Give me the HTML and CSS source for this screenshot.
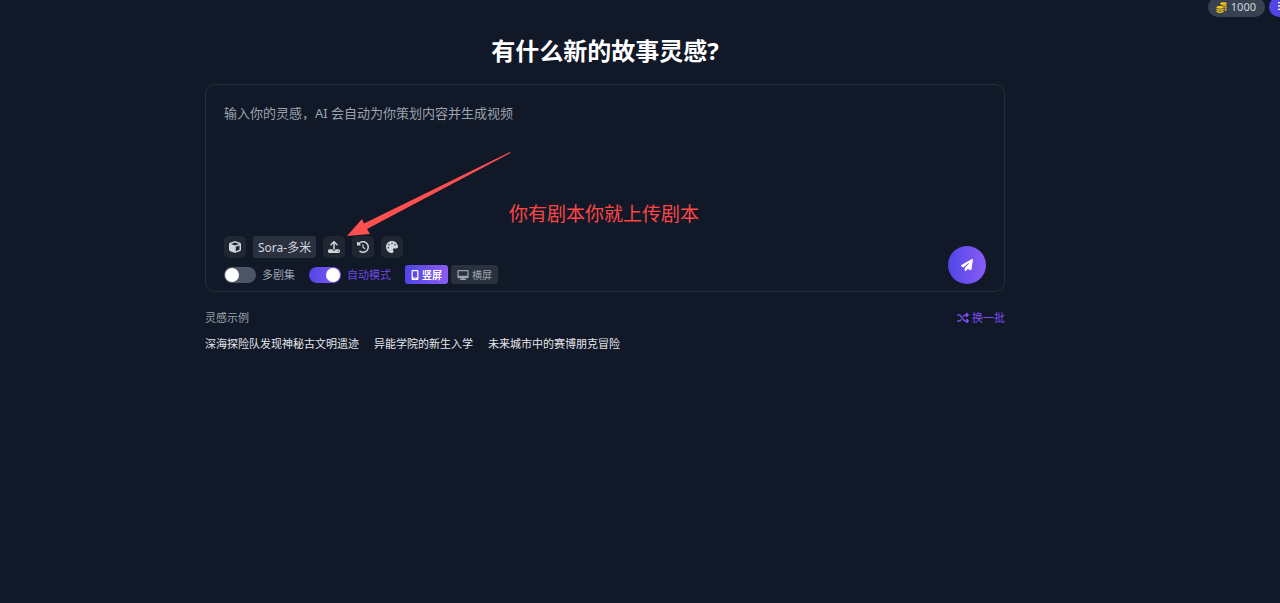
FILE: index.html
```
<!DOCTYPE html>
<html lang="zh-CN">
<head>
    <meta charset="UTF-8">
    <meta name="viewport" content="width=device-width, initial-scale=1.0">
    <title>故事灵感</title>
    <link rel="stylesheet" href="styles.css">
</head>
<body>
    <header class="topbar">
        <div class="credits">
            <svg class="icon coins" viewBox="0 0 512 512">
                <ellipse cx="345" cy="70" rx="150" ry="60"></ellipse>
                <path d="M195 112c40 32 110 44 160 42 60-2 115-18 140-42v38c0 32-55 60-125 64-30-40-100-62-175-62z"></path>
                <path d="M400 250c40-6 75-18 95-36v42c0 28-38 50-92 60zM404 352c38-7 70-18 91-34v40c0 28-38 50-91 60z"></path>
                <ellipse cx="190" cy="250" rx="170" ry="66"></ellipse>
                <path d="M20 304c40 36 110 48 170 48s130-12 170-48v42c0 34-76 62-170 62S20 380 20 346z"></path>
                <path d="M20 400c40 36 110 48 170 48s130-12 170-48v42c0 36-76 66-170 66S20 478 20 442z"></path>
            </svg>
            <span>1000</span>
        </div>
        <button class="avatar" aria-label="用户菜单">
            <svg class="icon" viewBox="0 0 12 12"><path d="M0 0h10v2H0zM0 5h10v2H0zM0 10h10v2H0z"></path></svg>
        </button>
    </header>

    <div class="page">
        <main class="main">
            <h1 class="title">有什么新的故事灵感?</h1>

            <form class="card">
                <textarea class="prompt" aria-label="灵感" placeholder="输入你的灵感，AI 会自动为你策划内容并生成视频"></textarea>

                <div class="card-footer">
                    <div class="controls">
                        <div class="tools">
                            <button type="button" class="tool" aria-label="模型">
                                <svg class="icon" viewBox="0 0 512 512"><path d="M234.500 5.700c13.900-5 29.100-5 43.100 0l192 68.600C495 83.400 512 107.500 512 134.600V377.400c0 27-17 51.200-42.500 60.300l-192 68.600c-13.900 5-29.100 5-43.100 0l-192-68.600C17 428.600 0 404.500 0 377.400V134.600c0-27 17-51.200 42.500-60.300l192-68.600zM256 66L82.300 128 256 190l173.700-62L256 66zm32 368.600l160-57.100v-188L288 246.600v188z"></path></svg>
                            </button>
                            <button type="button" class="model">Sora-多米</button>
                            <button type="button" class="tool" aria-label="上传剧本">
                                <svg class="icon" viewBox="0 0 512 512"><path d="M288 109.300V352c0 17.700-14.300 32-32 32s-32-14.300-32-32V109.300l-73.400 73.400c-12.500 12.500-32.800 12.500-45.300 0s-12.500-32.800 0-45.300l128-128c12.500-12.500 32.800-12.500 45.300 0l128 128c12.500 12.500 12.500 32.800 0 45.300s-32.800 12.500-45.300 0L288 109.300zM64 352H192c0 35.300 28.700 64 64 64s64-28.700 64-64H448c35.300 0 64 28.700 64 64v32c0 35.300-28.700 64-64 64H64c-35.300 0-64-28.700-64-64V416c0-35.300 28.700-64 64-64zM432 456a24 24 0 1 0 0-48 24 24 0 1 0 0 48z"></path></svg>
                            </button>
                            <button type="button" class="tool" aria-label="历史记录">
                                <svg class="icon" viewBox="0 0 512 512"><path d="M75 75L41 41C25.900 25.900 0 36.600 0 57.900V168c0 13.300 10.700 24 24 24H134.100c21.400 0 32.100-25.900 17-41l-30.800-30.800C155 85.500 203 64 256 64c106 0 192 86 192 192s-86 192-192 192c-40.800 0-78.600-12.700-109.700-34.400c-14.500-10.100-34.400-6.600-44.600 7.900s-6.600 34.400 7.900 44.600C151.200 495 201.700 512 256 512c141.400 0 256-114.600 256-256S397.400 0 256 0C185.300 0 121.300 28.700 75 75zm181 53c-13.300 0-24 10.700-24 24V256c0 6.400 2.500 12.500 7 17l72 72c9.400 9.400 24.600 9.400 33.900 0s9.400-24.600 0-33.900l-65-65V152c0-13.300-10.700-24-24-24z"></path></svg>
                            </button>
                            <button type="button" class="tool" aria-label="风格">
                                <svg class="icon" viewBox="0 0 512 512"><path d="M512 256c0 .9 0 1.800 0 2.700c-.4 36.500-33.600 61.300-70.100 61.300H344c-26.500 0-48 21.500-48 48c0 3.400 .4 6.700 1 9.900c2.100 10.200 6.500 20 10.800 29.900c6.100 13.800 12.100 27.500 12.100 42c0 31.800-21.600 60.700-53.400 62c-3.500 .1-7 .2-10.600 .2C114.600 512 0 397.400 0 256S114.600 0 256 0S512 114.600 512 256zM128 288a32 32 0 1 0 -64 0 32 32 0 1 0 64 0zm0-96a32 32 0 1 0 0-64 32 32 0 1 0 0 64zM288 96a32 32 0 1 0 -64 0 32 32 0 1 0 64 0zm96 96a32 32 0 1 0 0-64 32 32 0 1 0 0 64z"></path></svg>
                            </button>
                        </div>

                        <div class="options">
                            <label class="toggle">
                                <input type="checkbox" class="switch">
                                <span>多剧集</span>
                            </label>
                            <label class="toggle active">
                                <input type="checkbox" class="switch" checked>
                                <span>自动模式</span>
                            </label>
                            <div class="ratio-group">
                                <button type="button" class="ratio active">
                                    <svg class="icon phone" viewBox="0 0 384 512"><path fill-rule="evenodd" d="M80 0h224c35 0 64 29 64 64v384c0 35-29 64-64 64H80c-35 0-64-29-64-64V64C16 29 45 0 80 0zm0 64v320h224V64zm80 360v32h64v-32z"></path></svg>
                                    竖屏
                                </button>
                                <button type="button" class="ratio">
                                    <svg class="icon" viewBox="0 0 576 512"><path fill-rule="evenodd" d="M64 0h448c35 0 64 29 64 64v288c0 35-29 64-64 64H346l11 32h59c18 0 32 14 32 32s-14 32-32 32H160c-18 0-32-14-32-32s14-32 32-32h59l11-32H64c-35 0-64-29-64-64V64C0 29 29 0 64 0zm0 64v224h448V64z"></path></svg>
                                    横屏
                                </button>
                            </div>
                        </div>
                    </div>

                    <button type="submit" class="send" aria-label="发送">
                        <svg class="icon" viewBox="0 0 512 512"><path d="M498.100 5.600c10.100 7 15.400 19.100 13.500 31.200l-64 416c-1.500 9.700-7.400 18.200-16 23s-18.900 5.400-28 1.600L284 427.700l-68.500 74.100c-8.900 9.700-22.900 12.900-35.200 8.100S160 493.200 160 480V396.400c0-4 1.500-7.800 4.200-10.700L331.800 202.800c5.800-6.300 5.600-16-.4-22s-15.700-6.400-22-.7L106 360.800 17.700 316.600C7.100 311.300 .3 300.700 0 288.900s5.900-22.800 16.100-28.700l448-256c10.700-6.100 23.900-5.500 34 1.400z"></path></svg>
                    </button>
                </div>

                <!-- hint pointing at the upload button -->
                <svg class="hint-arrow" viewBox="0 0 164 85">
                    <path d="M0 84L15 67l2 4.500L163 0l.5 1L20 77l3 5z"></path>
                </svg>
                <p class="hint-text">你有剧本你就上传剧本</p>
            </form>

            <section class="examples">
                <div class="examples-head">
                    <h2 class="examples-title">灵感示例</h2>
                    <button class="refresh">
                        <svg class="icon" viewBox="0 0 512 512"><path d="M403.800 34.400c12-5 25.700-2.200 34.900 6.900l64 64c6 6 9.400 14.100 9.400 22.600s-3.400 16.600-9.400 22.600l-64 64c-9.200 9.200-22.900 11.900-34.900 6.900s-19.800-16.600-19.800-29.600V160H352c-10.100 0-19.600 4.700-25.600 12.800L284 229.300 244 176l31.200-41.600C293.300 110.200 321.800 96 352 96h32V64c0-12.900 7.800-24.600 19.800-29.600zM164 282.700L204 336l-31.200 41.600C154.700 401.800 126.200 416 96 416H32c-17.700 0-32-14.300-32-32s14.300-32 32-32H96c10.100 0 19.600-4.700 25.600-12.800L164 282.700zm274.600 188c-9.200 9.200-22.900 11.900-34.900 6.900s-19.800-16.600-19.800-29.600V416H352c-30.200 0-58.700-14.200-76.800-38.400L121.600 172.800c-6-8.100-15.500-12.800-25.600-12.800H32c-17.700 0-32-14.300-32-32s14.300-32 32-32H96c30.200 0 58.700 14.200 76.800 38.400L326.400 339.200c6 8.100 15.500 12.800 25.600 12.800h32V320c0-12.900 7.800-24.600 19.800-29.600s25.700-2.200 34.900 6.900l64 64c6 6 9.400 14.100 9.400 22.600s-3.400 16.600-9.400 22.600l-64 64z"></path></svg>
                        换一批
                    </button>
                </div>
                <div class="examples-list">
                    <button class="example">深海探险队发现神秘古文明遗迹</button>
                    <button class="example">异能学院的新生入学</button>
                    <button class="example">未来城市中的赛博朋克冒险</button>
                </div>
            </section>
        </main>
    </div>
</body>
</html>
```
FILE: styles.css
```
* {
    box-sizing: border-box;
}

body {
    margin: 0;
    min-height: 100vh;
    font-family: "Noto Sans", "Noto Sans CJK SC", sans-serif;
    font-size: 11px;
    color: #e5e7eb;
    background-color: #111827;
}

button {
    display: flex;
    align-items: center;
    justify-content: center;
    margin: 0;
    padding: 0;
    font: inherit;
    color: inherit;
    background: none;
    border: none;
    cursor: pointer;
}

.icon {
    display: block;
    flex: none;
    width: 12px;
    height: 12px;
    fill: currentColor;
}

/* Top bar, tucked under the window edge */
.topbar {
    display: flex;
    justify-content: flex-end;
    align-items: flex-end;
    gap: 4px;
    height: 17px;
    overflow: hidden;
}

.credits {
    display: flex;
    align-items: center;
    gap: 4px;
    height: 20px;
    padding: 0 9px 0 8px;
    border-radius: 10px;
    line-height: 12px;
    color: #d1d5db;
    background-color: #374151;
}

.credits .coins {
    width: 11px;
    height: 11px;
    fill: #facc15;
}

.avatar {
    flex: none;
    width: 26px;
    height: 20px;
    padding-bottom: 2px;
    margin-right: -15px;
    border-radius: 10px;
    color: #fff;
    background-color: #4f46e5;
}

.avatar .icon {
    width: 8px;
}

.page {
    padding-right: 70px;
}

.main {
    max-width: 800px;
    margin: 0 auto;
}

.title {
    margin: 0;
    padding: 16px 0;
    font-size: 24px;
    line-height: 35px;
    text-align: center;
    color: #fff;
}

.card {
    position: relative;
    padding: 18px 18px 7px;
    border: 1px solid #242d3b;
    border-radius: 10px;
}

.prompt {
    display: block;
    width: 100%;
    height: 133px;
    padding: 0;
    font: inherit;
    font-size: 13px;
    line-height: 20px;
    color: #e5e7eb;
    background: none;
    border: none;
    outline: none;
    resize: none;
}

.prompt::placeholder {
    color: #9ca3af;
}

.card-footer {
    display: flex;
    justify-content: space-between;
    align-items: flex-end;
}

.controls {
    display: flex;
    flex-direction: column;
    gap: 7px;
}

.tools {
    display: flex;
    gap: 7px;
}

.tool {
    width: 22px;
    height: 22px;
    border-radius: 5px;
    color: #d1d5db;
    background-color: #1f2733;
}

.model {
    height: 22px;
    padding: 0 5px;
    font-size: 12px;
    border-radius: 3px;
    color: #d1d5db;
    background-color: #29313e;
}

.options {
    display: flex;
    align-items: center;
    gap: 14px;
}

.toggle {
    display: flex;
    align-items: center;
    gap: 6px;
    line-height: 16px;
    color: #9ca3af;
    cursor: pointer;
}

.toggle.active {
    color: #6d47e0;
}

.switch {
    appearance: none;
    display: flex;
    align-items: center;
    width: 32px;
    height: 16px;
    margin: 0;
    padding: 0 1px;
    border-radius: 8px;
    background-color: #4b5563;
    cursor: pointer;
}

.switch::before {
    content: "";
    width: 14px;
    height: 14px;
    border-radius: 50%;
    background-color: #fff;
}

.switch:checked {
    justify-content: flex-end;
    background: linear-gradient(90deg, #4f46e5, #8b5cf6);
}

.ratio-group {
    display: flex;
    gap: 3px;
}

.ratio {
    gap: 3px;
    height: 19px;
    padding: 0 6px;
    font-size: 10px;
    border-radius: 3px;
    color: #9ca3af;
    background-color: #29313e;
}

.ratio.active {
    font-weight: bold;
    color: #fff;
    background: linear-gradient(90deg, #4f46e5, #8b5cf6);
}

.ratio .icon {
    height: 10px;
}

.ratio .phone {
    width: 8px;
}

.send {
    width: 38px;
    height: 38px;
    border-radius: 50%;
    color: #fff;
    background: linear-gradient(90deg, #4f46e5, #8b5cf6);
}

.hint-arrow {
    position: absolute;
    left: 141px;
    top: 67px;
    width: 164px;
    height: 85px;
    fill: #ff5050;
    pointer-events: none;
}

.hint-text {
    position: absolute;
    left: 303px;
    top: 115px;
    margin: 0;
    font-size: 19px;
    line-height: 28px;
    color: #ff4646;
    pointer-events: none;
}

.examples {
    padding-top: 17px;
}

.examples-head {
    display: flex;
    justify-content: space-between;
    align-items: center;
    line-height: 17px;
}

.examples-title {
    margin: 0;
    font-size: 11px;
    font-weight: normal;
    color: #9ca3af;
}

.refresh {
    gap: 3px;
    color: #7c4df0;
}

.examples-list {
    display: flex;
    flex-wrap: wrap;
    gap: 15px;
    padding-top: 9px;
    line-height: 17px;
}
```
